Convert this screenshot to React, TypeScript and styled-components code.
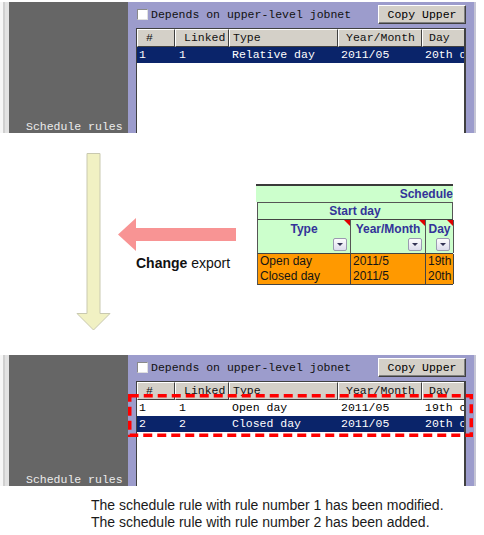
import React from "react";
import styled, { createGlobalStyle } from "styled-components";

const GlobalStyle = createGlobalStyle`
  html, body {
    margin: 0;
    padding: 0;
    background: #ffffff;
  }
  body {
    font-family: "Liberation Sans", Arial, sans-serif;
  }
`;

const Page = styled.div`
  width: 484px;
  height: 535px;
  overflow: hidden;
  background: #ffffff;
`;

/* ---------- jobnet panel ---------- */

const Frame = styled.div<{ $top: number }>`
  position: relative;
  display: flex;
  height: 131px;
  margin-top: ${(p) => p.$top}px;
`;

const Strip = styled.div`
  width: 9px;
  flex-shrink: 0;
  background: linear-gradient(
    to right,
    #f6f6f6 0 3px,
    #cfcfcf 3px 5px,
    #e2e2e2 5px 9px
  );
`;

const Side = styled.div`
  width: 119px;
  flex-shrink: 0;
  display: flex;
  flex-direction: column;
  justify-content: flex-end;
  background: #666666;
  color: #ececec;
  font-family: "Liberation Mono", "Courier New", monospace;
  font-size: 11.5px;
  line-height: 12px;
  padding-left: 17px;
  box-sizing: border-box;
`;

const Main = styled.div`
  width: 346px;
  flex-shrink: 0;
  display: flex;
  flex-direction: column;
  background: #9c9ccc;
  padding: 3px 8px 0 8px;
  box-sizing: border-box;
  font-family: "Liberation Mono", "Courier New", monospace;
  font-size: 11.5px;
`;

const Edge = styled.div`
  width: 2px;
  flex-shrink: 0;
  background: #c4c4d4;
`;

const Toolbar = styled.div`
  display: flex;
  align-items: center;
  justify-content: space-between;
  height: 19px;
`;

const CheckLabel = styled.label`
  display: flex;
  align-items: center;
  gap: 3px;
  padding-left: 1px;
  color: #111111;
`;

const CheckBox = styled.span`
  display: inline-block;
  width: 11px;
  height: 11px;
  background: #ffffff;
  box-sizing: border-box;
  border: 1px solid #8a8a8a;
  border-right-color: #e0e0e0;
  border-bottom-color: #e0e0e0;
`;

const Button = styled.button`
  width: 88px;
  height: 19px;
  padding: 0;
  background: #d4d0c8;
  border: 1px solid;
  border-color: #ffffff #404040 #404040 #ffffff;
  box-shadow: inset -1px -1px 0 #808080;
  font-family: inherit;
  font-size: 11.5px;
  color: #000000;
`;

const Table = styled.div`
  flex: 1;
  margin-top: 4px;
  background: #ffffff;
  border: 1px solid #404040;
  border-bottom: none;
  border-right-width: 2px;
  overflow: hidden;
`;

const Row = styled.div<{ $kind: "head" | "sel" | "plain" }>`
  display: grid;
  grid-template-columns: 38px 54px 109px 84px 60px;
  height: ${(p) => (p.$kind === "head" ? 18 : 16)}px;
  line-height: 16px;
  white-space: nowrap;
  background: ${(p) => (p.$kind === "sel" ? "#0a246a" : "#ffffff")};
  color: ${(p) => (p.$kind === "sel" ? "#ffffff" : "#000000")};
`;

const HeadCell = styled.div<{ $pad: number }>`
  box-sizing: border-box;
  background: #d4d0c8;
  border: 1px solid;
  border-color: #ffffff #404040 #404040 #ffffff;
  padding-left: ${(p) => p.$pad}px;
  color: #111111;
  overflow: hidden;
`;

const Cell = styled.div<{ $pad: number }>`
  padding-left: ${(p) => p.$pad}px;
  overflow: hidden;
`;

const Marquee = styled.svg`
  position: absolute;
  left: 128px;
  top: 39px;
  width: 345px;
  height: 43px;
  overflow: visible;
`;

const headPads = [8, 8, 3, 7, 6];
const rowPads = [2, 4, 3, 3, 3];
const headers = ["#", "Linked", "Type", "Year/Month", "Day"];

interface RuleRow {
  cells: string[];
  selected?: boolean;
}

interface PanelProps {
  top: number;
  rows: RuleRow[];
  marked?: boolean;
}

const JobnetPanel: React.FC<PanelProps> = ({ top, rows, marked }) => (
  <Frame $top={top}>
    <Strip />
    <Side>Schedule rules</Side>
    <Main>
      <Toolbar>
        <CheckLabel>
          <CheckBox />
          Depends on upper-level jobnet
        </CheckLabel>
        <Button>Copy Upper</Button>
      </Toolbar>
      <Table>
        <Row $kind="head">
          {headers.map((h, i) => (
            <HeadCell key={h} $pad={headPads[i]}>
              {h}
            </HeadCell>
          ))}
        </Row>
        {rows.map((r, ri) => (
          <Row key={ri} $kind={r.selected ? "sel" : "plain"}>
            {r.cells.map((c, i) => (
              <Cell key={i} $pad={rowPads[i]}>
                {c}
              </Cell>
            ))}
          </Row>
        ))}
      </Table>
    </Main>
    <Edge />
    {marked && (
      <Marquee viewBox="0 0 345 43">
        <rect
          x="1.75"
          y="1.75"
          width="341.5"
          height="39.5"
          fill="none"
          stroke="#ff0000"
          strokeWidth="3.5"
          strokeDasharray="9 5"
        />
      </Marquee>
    )}
  </Frame>
);

/* ---------- middle: arrows + spreadsheet ---------- */

const Middle = styled.div`
  display: flex;
  height: 222px;
`;

const DownArrow = styled.svg`
  flex-shrink: 0;
  width: 35px;
  height: 178px;
  margin: 20px 0 0 76px;
`;

const Export = styled.div`
  display: flex;
  flex-direction: column;
  margin: 85px 0 0 7px;
`;

const LeftArrow = styled.svg`
  width: 118px;
  height: 34px;
`;

const Caption = styled.div`
  margin-top: 3px;
  padding-left: 18px;
  font-size: 14px;
  line-height: 16px;
  color: #111111;
  white-space: nowrap;

  b {
    font-weight: bold;
  }
`;

const Sheet = styled.div`
  width: 197px;
  margin: 51px 0 0 20px;
  border-top: 2px solid #3a3a3a;
  font-family: "Liberation Sans", Arial, sans-serif;
  font-size: 12px;
`;

const SheetTitle = styled.div`
  height: 16px;
  line-height: 16px;
  background: #ccffcc;
  color: #333399;
  font-weight: bold;
  text-align: right;
  white-space: nowrap;
  overflow: hidden;
`;

const SheetBand = styled.div`
  margin-left: 1px;
  height: 17px;
  line-height: 17px;
  box-sizing: border-box;
  background: #ccffcc;
  border: 1px solid #555555;
  border-bottom: none;
  color: #333399;
  font-weight: bold;
  text-align: center;
`;

const SheetGrid = styled.div<{ $data?: boolean }>`
  display: grid;
  grid-template-columns: 93px 75px 28px;
  margin-left: 1px;
  background: ${(p) => (p.$data ? "#ff9900" : "#ccffcc")};
  border-left: 1px solid #555555;
  border-top: 1px solid #444444;
  ${(p) => p.$data && "border-bottom: 1px solid #444444;"}
`;

const SheetHead = styled.div`
  position: relative;
  display: flex;
  flex-direction: column;
  align-items: center;
  height: 33px;
  border-right: 1px solid #555555;
  color: #333399;
  font-weight: bold;
  line-height: 14px;
  padding-top: 2px;
  box-sizing: border-box;
  white-space: nowrap;
`;

const Corner = styled.span`
  position: absolute;
  top: 0;
  right: 0;
  width: 0;
  height: 0;
  border-top: 6px solid #e00000;
  border-left: 6px solid transparent;
`;

const DropButton = styled.span`
  margin-top: auto;
  margin-bottom: 2px;
  align-self: flex-end;
  margin-right: 3px;
  width: 14px;
  height: 13px;
  box-sizing: border-box;
  display: flex;
  align-items: center;
  justify-content: center;
  background: linear-gradient(#fdfdfd, #dcdcec);
  border: 1px solid #9a9ab0;
  border-radius: 2px;

  &::after {
    content: "";
    border-top: 3px solid #333355;
    border-left: 3px solid transparent;
    border-right: 3px solid transparent;
  }
`;

const SheetCell = styled.div`
  border-right: 1px solid #444444;
  padding: 0 2px;
  height: 15px;
  line-height: 15px;
  color: #141414;
  white-space: nowrap;
  overflow: hidden;
`;

const sheetHeads = ["Type", "Year/Month", "Day"];
const sheetRows = [
  ["Open day", "2011/5", "19th"],
  ["Closed day", "2011/5", "20th"],
];

const Note = styled.div`
  margin-top: 11px;
  padding-left: 91px;
  font-size: 14px;
  line-height: 17px;
  color: #1a1a1a;
  white-space: nowrap;
`;

const App: React.FC = () => (
  <Page>
    <GlobalStyle />
    <JobnetPanel
      top={2}
      rows={[{ cells: ["1", "1", "Relative day", "2011/05", "20th d"], selected: true }]}
    />
    <Middle>
      <DownArrow viewBox="0 0 35 178">
        <path
          d="M11 0.5 H24 V160.5 H34 L17.5 177 L1 160.5 H11 Z"
          fill="#f1f1c3"
          stroke="#c9c9b0"
          strokeWidth="1"
        />
      </DownArrow>
      <Export>
        <LeftArrow viewBox="0 0 118 34">
          <path d="M0 16.5 L18 0 V10 H118 V23 H18 V33 Z" fill="#f89494" />
        </LeftArrow>
        <Caption>
          <b>Change</b> export
        </Caption>
      </Export>
      <Sheet>
        <SheetTitle>Schedule</SheetTitle>
        <SheetBand>Start day</SheetBand>
        <SheetGrid>
          {sheetHeads.map((h) => (
            <SheetHead key={h}>
              {h}
              <Corner />
              <DropButton />
            </SheetHead>
          ))}
        </SheetGrid>
        <SheetGrid $data>
          {sheetRows.flat().map((c, i) => (
            <SheetCell key={i}>{c}</SheetCell>
          ))}
        </SheetGrid>
      </Sheet>
    </Middle>
    <JobnetPanel
      top={0}
      marked
      rows={[
        { cells: ["1", "1", "Open day", "2011/05", "19th o"] },
        { cells: ["2", "2", "Closed day", "2011/05", "20th c"], selected: true },
      ]}
    />
    <Note>
      The schedule rule with rule number 1 has been modified.
      <br />
      The schedule rule with rule number 2 has been added.
    </Note>
  </Page>
);

export default App;
